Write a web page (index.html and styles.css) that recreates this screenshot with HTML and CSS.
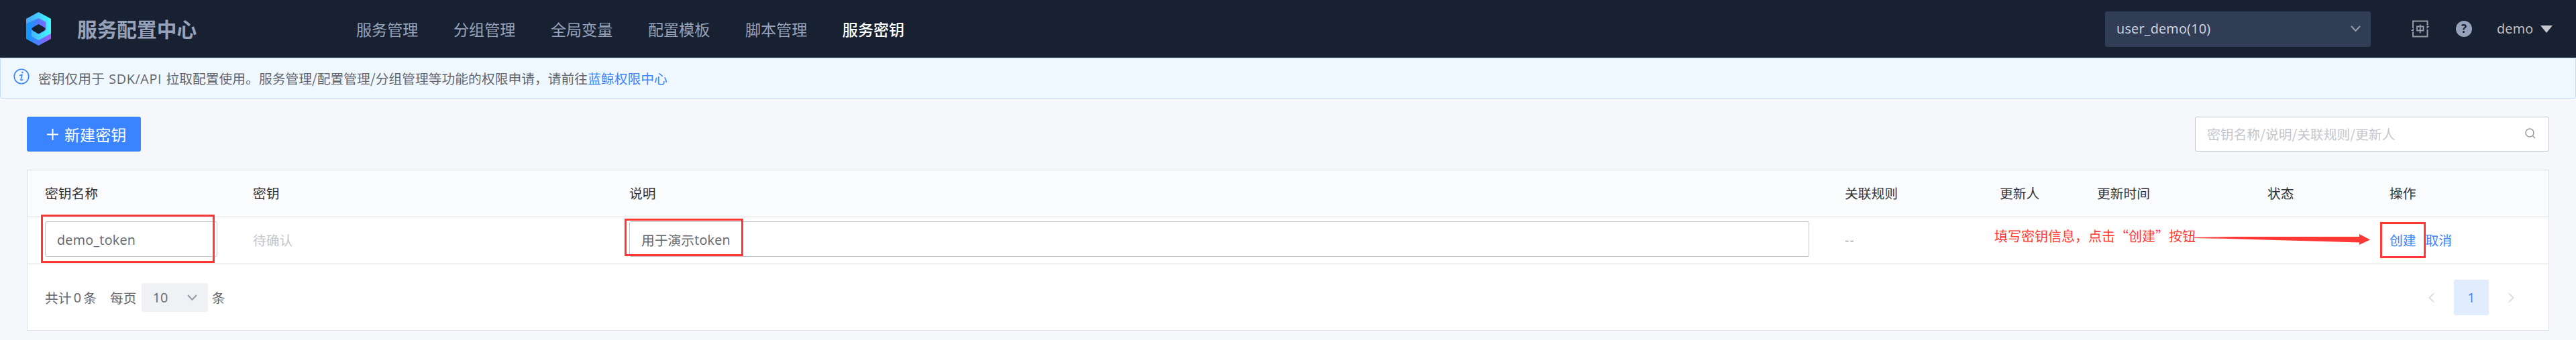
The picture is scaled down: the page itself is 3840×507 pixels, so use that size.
FILE: index.html
```html
<!DOCTYPE html>
<html lang="zh-CN">
<head>
<meta charset="utf-8">
<title>服务配置中心</title>
<link rel="stylesheet" href="styles.css">
</head>
<body>
<header class="header">
  <svg class="logo" viewBox="0 0 37 50">
    <defs>
      <linearGradient id="lg-a" x1="0" y1="0" x2="1" y2="0"><stop offset="0" stop-color="#4aa4ff"/><stop offset="1" stop-color="#3ffaff"/></linearGradient>
      <linearGradient id="lg-b" x1="0" y1="0" x2="1" y2="0"><stop offset="0" stop-color="#069dff"/><stop offset="1" stop-color="#a259ff"/></linearGradient>
    </defs>
    <path fill="url(#lg-b)" d="M0 18 18.5 8.500 30 15V32H37V40L18.500 50 0 40Z"/>
    <path fill="url(#lg-a)" d="M0 10 18.5 0 37 10V32L18.500 42 8 36V27L18.500 33 29.500 27V15L18.500 9 0 18Z"/>
    <path fill="#182132" d="M8 25 10.500 22.500 18.500 18 26.500 22.500 29 25 26.500 28 18.500 32.500 10.500 28Z"/>
  </svg>
  <h1 class="title">服务配置中心</h1>
  <nav class="nav">
    <a class="nav-item">服务管理</a>
    <a class="nav-item">分组管理</a>
    <a class="nav-item">全局变量</a>
    <a class="nav-item">配置模板</a>
    <a class="nav-item">脚本管理</a>
    <a class="nav-item active">服务密钥</a>
  </nav>
  <div class="space-select"><span class="latin wide">user_demo(10)</span>
    <svg class="chevron" viewBox="0 0 15 10"><path d="M1 1 7.500 8 14 1"/></svg>
  </div>
  <svg class="lang" viewBox="0 0 27 26">
    <path d="M3 12V1.500H24.500V8M3 17V24.500H24.500V14"/>
    <path d="M9 9.500H18.500V15.500H9ZM13.750 6.500V19.500" class="thin"/>
    <path d="M0 16 4 11.500V16ZM27.500 9 23.500 13.500V9Z" class="solid"/>
  </svg>
  <div class="help">?</div>
  <div class="user"><span class="latin wide">demo</span><i class="caret"></i></div>
</header>
<div class="alert">
  <svg class="info" viewBox="0 0 24 24"><circle cx="12" cy="12" r="10.800"/><path d="M9 10.500 13 9.500 11 17Q11 18.500 14.500 16.500"/><circle class="dot" cx="13.500" cy="6" r="1.300"/></svg>
  <p class="alert-text">密钥仅用于<span class="latin sdk">SDK/API</span>拉取配置使用。服务管理/配置管理/分组管理等功能的权限申请，请前往<a class="link">蓝鲸权限中心</a></p>
</div>
<main class="main">
  <div class="toolbar">
    <button class="create"><svg class="plus" viewBox="0 0 17 17"><path d="M8.500 0V17M0 8.500H17"/></svg>新建密钥</button>
    <div class="search"><span>密钥名称/说明/关联规则/更新人</span>
      <svg class="lens" viewBox="0 0 16 16"><circle cx="7" cy="7" r="6"/><path d="M11.500 11.500 15 15"/></svg>
    </div>
  </div>
  <section class="table">
    <div class="row head">
      <div>密钥名称</div><div>密钥</div><div>说明</div><div>关联规则</div><div>更新人</div><div>更新时间</div><div>状态</div><div>操作</div>
    </div>
    <div class="row body">
      <div><div class="input"><span class="latin wide">demo_token</span></div></div>
      <div class="pending">待确认</div>
      <div><div class="input">用于演示<span class="latin wide">token</span></div></div>
      <div class="dash">--</div><div></div><div></div><div></div>
      <div class="actions"><a>创建</a><a>取消</a></div>
    </div>
    <footer class="pager">
      <span>共计</span><span class="latin total">0</span><span>条</span>
      <span class="per">每页</span>
      <div class="size"><span class="latin">10</span><svg class="chevron" viewBox="0 0 15 10"><path d="M1 1 7.500 8 14 1"/></svg></div>
      <span>条</span>
      <div class="pages">
        <svg class="arrow" viewBox="0 0 9 14"><path d="M8 .5 1.500 7 8 13.500"/></svg>
        <span class="page latin">1</span>
        <svg class="arrow" viewBox="0 0 9 14"><path d="M1 .5 7.500 7 1 13.500"/></svg>
      </div>
    </footer>
  </section>
</main>
<div class="mark mark-name"></div>
<div class="mark mark-desc"></div>
<div class="mark mark-create"></div>
<div class="note">填写密钥信息，点击“创建”按钮</div>
<svg class="note-arrow" viewBox="0 0 264 18"><path d="M0 5 62 4 246 4V0L262 8.500 246 16V12.500L50 7 0 6Z"/></svg>
</body>
</html>
```
FILE: styles.css
```css
* { box-sizing: border-box; }
body {
  margin: 0;
  width: 3840px;
  height: 507px;
  overflow: hidden;
  background: #f5f7fa;
  color: #63656e;
  font: 400 19.8px/30px "Noto Sans CJK SC", sans-serif;
  white-space: nowrap;
}
.latin { font-family: "Open Sans", "Noto Sans", sans-serif; }
.wide { letter-spacing: .25px; }
.header { display: flex; align-items: center; height: 86px; padding: 0 35px 0 39px; background: #182132; }
.logo { width: 37px; height: 50px; }
.title { margin: 0 0 0 39px; width: 416px; font-size: 29.7px; font-weight: 700; color: #96a2b9; }
.nav { display: flex; gap: 52.6px; font-size: 23.1px; color: #96a2b9; }
.nav-item.active { color: #fff; font-weight: 500; }
.space-select { display: flex; align-items: center; justify-content: space-between; width: 396px; height: 53px; margin-left: auto; padding: 0 15px 0 17px; border-radius: 3px; background: #303d55; color: #d3d9e4; }
.chevron { width: 15px; height: 10px; fill: none; stroke: #979ba5; stroke-width: 2; }
.lang { width: 27px; height: 26px; margin-left: 60px; fill: none; stroke: #979ba5; stroke-width: 2; }
.lang .thin { stroke-width: 1.8; }
.lang .solid { fill: #979ba5; stroke: none; }
.help { width: 24px; height: 24px; margin-left: 40px; border-radius: 50%; background: #96a2b9; color: #182132; font: 700 17px/24px "Open Sans", sans-serif; text-align: center; }
.user { display: flex; align-items: center; justify-content: space-between; width: 83px; margin-left: 37px; color: #c4c6cc; }
.caret { border: 9px solid transparent; border-top: 11px solid #c4c6cc; border-bottom: 0; }
.alert { display: flex; height: 61px; padding: 15px 19px; border: 1px solid #c5daff; border-radius: 3px; background: #f0f8ff; }
.info { width: 24px; height: 24px; fill: none; stroke: #3a84ff; stroke-width: 1.6; }
.info .dot { fill: #3a84ff; stroke: none; }
.alert-text { margin: 0 0 0 13px; }
.sdk { display: inline-block; width: 91.5px; letter-spacing: .6px; text-align: center; }
.link, .actions { color: #3a84ff; }
.main { padding: 27px 40px 0; }
.toolbar { display: flex; justify-content: space-between; }
.create { display: flex; align-items: center; gap: 9px; width: 170px; height: 52px; padding: 0 0 0 30px; border: 0; border-radius: 3px; background: #3a84ff; color: #fff; font: 400 23.1px/30px "Noto Sans CJK SC", sans-serif; }
.plus { width: 17px; height: 17px; stroke: #fff; stroke-width: 2; }
.search { display: flex; align-items: center; justify-content: space-between; width: 528px; height: 52px; padding: 0 19px 0 17px; border: 1px solid #c4c6cc; border-radius: 3px; background: #fff; color: #c4c6cc; }
.lens { width: 16px; height: 16px; margin-bottom: 2px; fill: none; stroke: #979ba5; stroke-width: 1.5; }
.table { height: 240px; margin-top: 27px; border: 1px solid #dcdee5; background: #fff; }
.row { display: grid; grid-template-columns: 310px 561px 1812px 231px 145px 254px 182px 1fr; align-items: center; height: 70px; padding: 0 0 1px 26px; border-bottom: 1px solid #dcdee5; }
.head { background: #fafbfd; color: #313238; }
.input { display: flex; align-items: center; height: 53px; margin: 0 53px 3px 0; padding: 2px 17px 0; border: 1px solid #c4c6cc; border-radius: 3px; }
.pending { color: #c4c6cc; }
.dash { font-family: "Open Sans", sans-serif; font-weight: 300; letter-spacing: 1px; }
.actions { display: flex; gap: 13.8px; }
.pager { display: flex; align-items: center; height: 99px; padding: 0 51px 0 26px; }
.total { width: 17.7px; text-align: center; }
.per { margin-left: 20px; }
.size { display: flex; align-items: center; justify-content: space-between; width: 99px; height: 43px; margin: 0 6px 0 7px; padding: 0 16px 0 17px; border-radius: 3px; background: #f0f1f5; }
.pages { display: flex; align-items: center; gap: 29px; margin-left: auto; }
.page { width: 52px; height: 53px; border-radius: 3px; background: #e1ecff; color: #3a84ff; line-height: 53px; text-align: center; }
.arrow { width: 9px; height: 14px; fill: none; stroke: #dcdee5; stroke-width: 2; }
.mark { position: absolute; border: 3px solid #ff3836; }
.mark-name { left: 61px; top: 320px; width: 259px; height: 72px; }
.mark-desc { left: 931px; top: 326px; width: 177px; height: 56px; }
.mark-create { left: 3548px; top: 331px; width: 68px; height: 54px; }
.note { position: absolute; left: 2973px; top: 337px; font-size: 20px; color: #ff3836; }
.note-arrow { position: absolute; left: 3271px; top: 349px; width: 264px; height: 18px; fill: #ff3836; }
```
